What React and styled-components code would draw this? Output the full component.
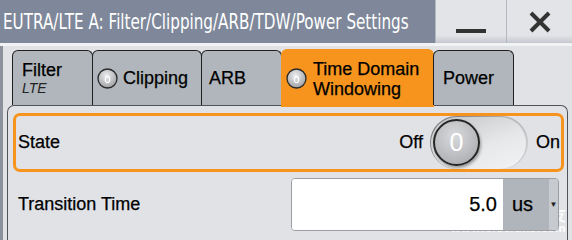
import React from "react";
import styled, { createGlobalStyle } from "styled-components";

const colors = {
  title: "#7e889a",
  panel: "#e1e2e6",
  tab: "#b1b6bc",
  orange: "#f7941d",
  line: "#1f1f1f",
};

const GlobalStyle = createGlobalStyle`
  body {
    margin: 0;
    background: ${colors.panel};
    font-family: "Liberation Sans", Arial, sans-serif;
  }
`;

const Window = styled.div`
  position: relative;
  width: 572px;
  height: 240px;
  overflow: hidden;
  display: flex;
  flex-direction: column;
  background: ${colors.panel};
  color: #000;
  -webkit-text-stroke: 0.25px #000;
`;

const TitleBar = styled.div`
  height: 43px;
  flex-shrink: 0;
  display: flex;
  background: ${colors.title};
`;

const Title = styled.div`
  flex: 1;
  min-width: 0;
  padding-left: 3px;
  overflow: hidden;
  white-space: nowrap;
`;

const TitleText = styled.span`
  display: inline-block;
  color: #fff;
  -webkit-text-stroke: 0;
  font-family: "DejaVu Sans", sans-serif;
  font-size: 22px;
  line-height: 43px;
  transform: scaleX(0.69);
  transform-origin: left center;
`;

const WinButton = styled.div`
  width: ${(p) => p.$w}px;
  flex-shrink: 0;
  height: 43px;
  box-sizing: border-box;
  border-left: 1px solid #b3b7be;
  background: linear-gradient(#e3e4e8 82%, #c4c7ce);
  display: flex;
  align-items: center;
  justify-content: center;
`;

const MinBar = styled.div`
  width: 30px;
  height: 4px;
  margin-top: 18px;
  background: #333;
`;

const Strip = styled.div`
  height: 3px;
  flex-shrink: 0;
  background: #f1f2f4;
`;

const Body = styled.div`
  flex: 1;
  display: flex;
  flex-direction: column;
  border-left: 3px solid #8c929b;
  padding: 4px 0 0 4px;
`;

const TabRow = styled.div`
  height: 55px;
  display: flex;
  align-items: flex-start;
  padding-left: 6px;
  position: relative;
  z-index: 2;
`;

const Tab = styled.div`
  box-sizing: border-box;
  width: ${(p) => p.$w}px;
  height: ${(p) => (p.$active ? 58 : 55)}px;
  margin-top: ${(p) => (p.$active ? -1 : 0)}px;
  margin-left: -1px;
  border: 1px solid ${(p) => (p.$active ? colors.orange : colors.line)};
  border-bottom: none;
  border-radius: 6px 6px 0 0;
  background: ${(p) => (p.$active ? colors.orange : colors.tab)};
  display: flex;
  align-items: center;
  gap: ${(p) => p.$gap || 5}px;
  padding-left: ${(p) => p.$pad}px;
  font-size: 18px;
  line-height: 20px;
`;

const TabStack = styled.div`
  display: flex;
  flex-direction: column;
`;

const Sub = styled.span`
  font-size: 14px;
  font-style: italic;
  line-height: 16px;
  color: #222;
  -webkit-text-stroke: 0;
`;

const Panel = styled.div`
  flex: 1;
  position: relative;
  z-index: 1;
  margin-right: 4px;
  border: 1px solid #505358;
  border-bottom: none;
  border-radius: 7px 7px 0 0;
  padding: 7px 3px 0 5px;
  display: flex;
  flex-direction: column;
  gap: 6px;
`;

const StateBox = styled.div`
  box-sizing: border-box;
  height: 59px;
  border: 3px solid ${colors.orange};
  border-radius: 7px;
  display: flex;
  align-items: center;
  padding: 0 1px 0 2px;
  font-size: 18px;
`;

const Label = styled.div`
  flex: 1;
  font-size: 18px;
`;

const Toggle = styled.div`
  box-sizing: border-box;
  width: 98px;
  height: 53px;
  margin: 0 8px 0 7px;
  border-radius: 27px;
  padding: 1px 0 0 2px;
  background: linear-gradient(135deg, #6f7072, #b9babc 60%, #d5d6d8);
  display: flex;
  align-items: center;
`;

const Track = styled.div`
  box-sizing: border-box;
  width: 100%;
  height: 100%;
  margin: -1px 2px 0 -1px;
  border-radius: 26px;
  background: linear-gradient(160deg, #c4c5c7, #e6e7e9 55%, #f2f3f4);
  display: flex;
  align-items: center;
  padding-left: 2px;
`;

const Knob = styled.div`
  box-sizing: border-box;
  width: 47px;
  height: 47px;
  border-radius: 50%;
  border: 2px solid #262626;
  background: radial-gradient(circle at 45% 35%, #d9dadc, #b4b5b8 70%, #9c9da0);
  box-shadow: 1px 2px 3px rgba(0, 0, 0, 0.35);
  display: flex;
  align-items: center;
  justify-content: center;
  color: #fff;
  -webkit-text-stroke: 0;
  font-size: 25px;
  line-height: 1;
`;

const Row = styled.div`
  display: flex;
  align-items: center;
  padding: 0 5px;
`;

const Field = styled.div`
  box-sizing: border-box;
  width: 268px;
  height: 53px;
  border: 1px solid #9c9ea3;
  border-radius: 4px;
  overflow: hidden;
  display: flex;
  font-size: 20px;
`;

const Value = styled.div`
  flex: 1;
  background: #fff;
  display: flex;
  align-items: center;
  justify-content: flex-end;
  padding-right: 6px;
`;

const Unit = styled.div`
  width: 46px;
  box-sizing: border-box;
  background: #b0b5bb;
  display: flex;
  align-items: center;
  padding-left: 9px;
`;

const Arrow = styled.div`
  width: 9px;
  background: #c7cace;
  display: flex;
  align-items: center;
  justify-content: center;
  font-size: 8px;
  color: #222;
  -webkit-text-stroke: 0;
`;

const Watermark = styled.div`
  position: absolute;
  right: 6px;
  bottom: 5px;
  display: flex;
  flex-direction: column;
  align-items: flex-end;
  color: rgba(255, 255, 255, 0.85);
  -webkit-text-stroke: 0;
  pointer-events: none;
`;

const WmCn = styled.div`
  font-family: "Noto Sans CJK SC", sans-serif;
  font-size: 16px;
  font-weight: 700;
  line-height: 18px;
`;

const WmUrl = styled.div`
  font-family: "DejaVu Sans", sans-serif;
  font-size: 11px;
  font-weight: 700;
  line-height: 12px;
`;

const Radio = () => (
  <svg width="21" height="21" viewBox="0 0 21 21">
    <defs>
      <radialGradient id="rg" cx="45%" cy="35%" r="65%">
        <stop offset="0" stopColor="#eeeff1" />
        <stop offset="1" stopColor="#9fa1a4" />
      </radialGradient>
    </defs>
    <circle cx="10.5" cy="10.5" r="9.5" fill="url(#rg)" stroke="#2a2a2a" strokeWidth="1.3" />
    <ellipse cx="10.5" cy="11.5" rx="2.2" ry="3.2" fill="none" stroke="#fff" strokeWidth="1.2" />
  </svg>
);

const Close = () => (
  <svg width="22" height="22" viewBox="0 0 22 22">
    <path d="M2 2 L20 20 M20 2 L2 20" stroke="#333" strokeWidth="4" />
  </svg>
);

const App = () => (
  <>
    <GlobalStyle />
    <Window>
      <TitleBar>
        <Title>
          <TitleText>EUTRA/LTE A: Filter/Clipping/ARB/TDW/Power Settings</TitleText>
        </Title>
        <WinButton $w={71}>
          <MinBar />
        </WinButton>
        <WinButton $w={66}>
          <Close />
        </WinButton>
      </TitleBar>
      <Strip />
      <Body>
        <TabRow>
          <Tab $w={81} $pad={9}>
            <TabStack>
              <span>Filter</span>
              <Sub>LTE</Sub>
            </TabStack>
          </Tab>
          <Tab $w={110} $pad={4}>
            <Radio />
            Clipping
          </Tab>
          <Tab $w={81} $pad={7}>
            ARB
          </Tab>
          <Tab $w={153} $pad={4} $gap={6} $active>
            <Radio />
            <TabStack>
              <span>Time Domain</span>
              <span>Windowing</span>
            </TabStack>
          </Tab>
          <Tab $w={81} $pad={9}>
            Power
          </Tab>
        </TabRow>
        <Panel>
          <StateBox>
            <Label>State</Label>
            <span>Off</span>
            <Toggle>
              <Track>
                <Knob>0</Knob>
              </Track>
            </Toggle>
            <span>On</span>
          </StateBox>
          <Row>
            <Label>Transition Time</Label>
            <Field>
              <Value>5.0</Value>
              <Unit>us</Unit>
              <Arrow>▼</Arrow>
            </Field>
          </Row>
        </Panel>
      </Body>
      <Watermark>
        <WmCn>电子发烧友</WmCn>
        <WmUrl>www.elecfans.com</WmUrl>
      </Watermark>
    </Window>
  </>
);

export default App;
